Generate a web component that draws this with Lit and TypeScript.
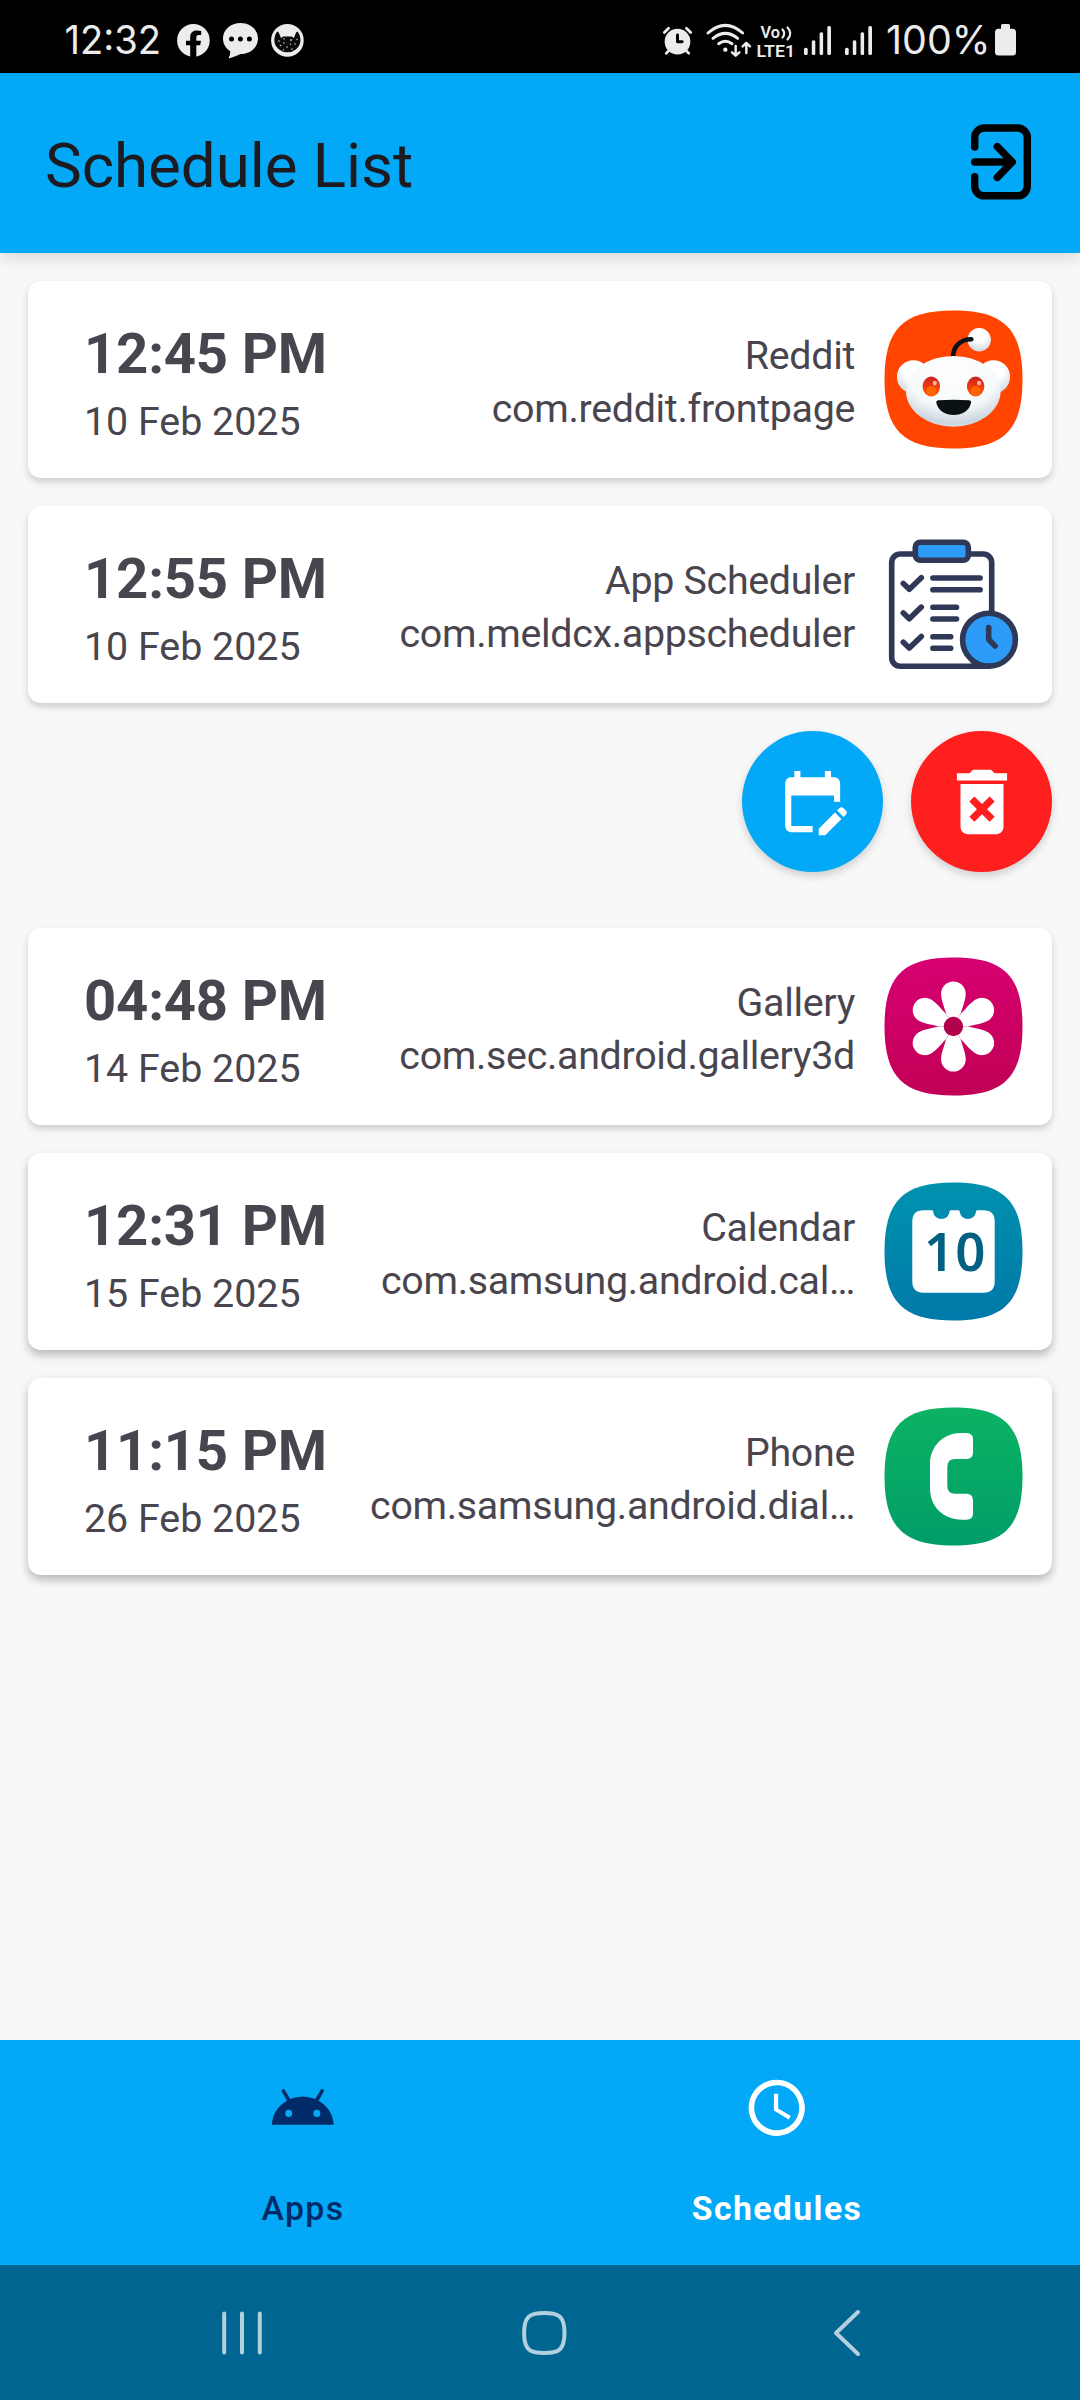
import { LitElement, html, svg, css, type TemplateResult } from "lit";
import { customElement, property } from "lit/decorators.js";

interface Schedule {
  time: string;
  date: string;
  app: string;
  pkg: string;
  icon: string;
  open?: boolean;
}

const SQUIRCLE =
  "M0 69C0 18.5 18.5 0 69 0S138 18.5 138 69 119.5 138 69 138 0 119.5 0 69Z";

const appIcons: Record<string, TemplateResult> = {
  reddit: svg`
    <defs>
      <radialGradient id="head" cx=".5" cy=".25" r=".8">
        <stop offset="0" stop-color="#fff" /><stop offset=".6" stop-color="#f6f9fa" />
        <stop offset=".88" stop-color="#cbd5de" /><stop offset="1" stop-color="#e4e9ee" />
      </radialGradient>
      <radialGradient id="ball" cx=".5" cy=".3" r=".75">
        <stop offset=".4" stop-color="#fff" /><stop offset="1" stop-color="#c9d3db" />
      </radialGradient>
      <linearGradient id="eye" x2="0" y2="1">
        <stop offset="0" stop-color="#c8232c" /><stop offset=".5" stop-color="#f03a0a" />
        <stop offset="1" stop-color="#ff5a00" />
      </linearGradient>
    </defs>
    <path d=${SQUIRCLE} fill="#ff4500" />
    <circle cx="94.7" cy="29.2" r="11.7" fill="url(#ball)" />
    <path d="M68.6 46.6C68.6 36 76 28.8 86.8 28.8" fill="none" stroke="#0b1216" stroke-width="4.6" stroke-linecap="round" />
    <circle cx="29" cy="66.3" r="16.6" fill="url(#ball)" />
    <circle cx="109" cy="66.3" r="16.6" fill="url(#ball)" />
    <ellipse cx="68.8" cy="80.8" rx="47.3" ry="35.4" fill="url(#head)" />
    <ellipse cx="46.8" cy="76" rx="8.7" ry="9.9" fill="url(#eye)" />
    <ellipse cx="91.1" cy="76" rx="8.7" ry="9.9" fill="url(#eye)" />
    <circle cx="46.8" cy="80.5" r="5" fill="#ff6500" />
    <circle cx="91.1" cy="80.5" r="5" fill="#ff6500" />
    <ellipse cx="50.3" cy="72.6" rx="2" ry="2.4" fill="#ffb9a0" />
    <ellipse cx="94.6" cy="72.6" rx="2" ry="2.4" fill="#ffb9a0" />
    <path d="M53.6 89.8Q69.2 88.8 84.8 89.8Q87 90 86.6 92.2C84.6 100.6 77.6 104.4 69.2 104.4S53.8 100.6 51.8 92.2Q51.4 90 53.6 89.8Z" fill="#0b1216" />`,
  scheduler: svg`
    <g fill="none" stroke="#2f3857" stroke-width="5.6" stroke-linecap="round" stroke-linejoin="round">
      <path d="M107.2 80V27a8.5 8.5 0 0 0-8.5-8.5H15.7A8.5 8.5 0 0 0 7.2 27V122.3a8.5 8.5 0 0 0 8.5 8.5H104" />
      <rect x="30.8" y="6.8" width="53" height="18" rx="5" fill="#2d9bf8" />
      <path d="M18.8 48l6 5.8 12-11.6M18.8 77.4l6 5.8 12-11.6M18.8 106.7l6 5.8 12-11.6" />
      <path d="M48.4 42.5H95.6M48.4 54.2H95.6M48.4 71.8H72M48.4 83.5H72M48.4 101.2H66.2M48.4 112.8H66.2" />
      <path d="M86 126.5L90 130.6H100Z" fill="#2f3857" stroke-width="1" />
      <circle cx="104.5" cy="104.2" r="26.4" fill="#2d9bf8" />
      <path d="M104.2 92V104l6.4 6.4" />
    </g>`,
  gallery: svg`
    <defs><linearGradient id="pink" x2=".1" y2="1">
      <stop offset="0" stop-color="#d80073" /><stop offset="1" stop-color="#c20056" />
    </linearGradient></defs>
    <path d=${SQUIRCLE} fill="url(#pink)" />
    ${[0, 60, 120, 180, 240, 300].map(
      (a) => svg`<path transform="rotate(${a} 68.9 69)" fill="#fff"
        d="M68.9 69L61.7 56.4C59.4 48.4 56.6 42 56.6 36.2a12.3 12.3 0 0 1 24.6 0C81.2 42 78.4 48.4 76.1 56.4Z" />`
    )}
    <circle cx="68.9" cy="69" r="9.7" fill="#b1004c" />`,
  calendar: svg`
    <defs><linearGradient id="teal" x2=".1" y2="1">
      <stop offset="0" stop-color="#0093af" /><stop offset="1" stop-color="#007aa8" />
    </linearGradient></defs>
    <path d=${SQUIRCLE} fill="url(#teal)" />
    <path fill="#fff" d="M39 27.8H47.3Q48.6 27.8 48.7 29.2A8.2 8.2 0 0 0 65 29.2Q65.1 27.8 66.4 27.8H73.8Q75.1 27.8 75.2 29.2A8.2 8.2 0 0 0 91.5 29.2Q91.6 27.8 92.9 27.8H99Q110.2 27.8 110.2 39V99Q110.2 110.2 99 110.2H39Q27.8 110.2 27.8 99V39Q27.8 27.8 39 27.8Z" />
    <text class="day" x="39.5" y="88.3" textLength="61.5">10</text>`,
  phone: svg`
    <defs><linearGradient id="green" x2="0" y2="1">
      <stop offset="0" stop-color="#0cb363" /><stop offset="1" stop-color="#009d68" />
    </linearGradient></defs>
    <path d=${SQUIRCLE} fill="url(#green)" />
    <path fill="#fff" d="M82 25.5q6.5 0 6.5 6.5V45q0 6.5-6.5 6.5H70.5q-7.7 0-7.7 7.7V78.5q0 7.7 7.7 7.7H82q6.5 0 6.5 6.5V105.7q0 6.5-6.5 6.5H77C59 112.2 45.5 99 45.5 81V56.5C45.5 38.7 59 25.5 77 25.5Z" />`,
};

@customElement("status-bar")
class StatusBar extends LitElement {
  static styles = css`
    :host { display: flex; height: 73px; background: #000; padding: 0 64px; color: #ececec; font-family: Inter, Roboto, sans-serif; }
    .group { display: flex; align-items: flex-start; }
    .right { margin-left: auto; }
    svg { display: block; flex: none; overflow: visible; fill: #ececec; }
    .clock { width: 98px; height: 73px; margin-right: 15px; font-size: 39px; }
    .percent { width: 101px; height: 73px; margin: 0 7px 0 15px; font-size: 39px; }
    .volte { font: 600 16.5px Roboto, sans-serif; margin: 25px 0 0 6px; }
    .fb { margin-top: 24px; }
    .chat { margin: 23px 0 0 13px; }
    .cat { margin: 24px 0 0 13px; }
    .alarm { margin-top: 26px; }
    .wifi { margin: 24px 0 0 14px; }
    .sig { margin: 26px 0 0 10px; }
    .sig2 { margin: 26px 0 0 14px; }
    .battery { margin-top: 24px; }
    .line { fill: none; stroke: #ececec; stroke-linecap: round; stroke-linejoin: round; }
    .ink { fill: none; stroke: #000; }
  `;

  private signal(cls: string) {
    return html`<svg class=${cls} width="27" height="29" viewBox="0 0 27 29">
      <rect x="0" y="21.7" width="3.7" height="7.3" rx="1.6" />
      <rect x="7.8" y="14.3" width="3.5" height="14.7" rx="1.5" />
      <rect x="15.6" y="6.3" width="3.5" height="22.7" rx="1.5" />
      <rect x="23.3" y="0" width="3.7" height="29" rx="1.5" />
    </svg>`;
  }

  render() {
    return html`
      <div class="group">
        <svg class="clock"><text x="0.5" y="54" textLength="96.5" lengthAdjust="spacingAndGlyphs">12:32</text></svg>
        <svg class="fb" width="33" height="33" viewBox="0 0 33 33">
          <circle cx="16.4" cy="16.4" r="16.3" />
          <path fill="#000" d="M13.2 33V21.2H9V16.7H13.2V13.4C13.2 9 15.7 6.6 19.8 6.6Q22.4 6.6 24.2 7V11H21.8C19.9 11 19.3 12 19.3 13.4V16.7H24L23.2 21.2H19.3V33Z" />
        </svg>
        <svg class="chat" width="35" height="35" viewBox="0 0 35 35">
          <path d="M17.5 0C27.3 0 35 6.6 35 15.5S27.3 31 17.5 31Q12 33.8 6.6 35.2Q5.4 35.2 6 34Q7.4 31.4 7.2 28.2C2.8 25.4 0 21 0 15.5 0 6.6 7.7 0 17.5 0Z" />
          <g fill="#000"><circle cx="8.5" cy="16" r="2.5" /><circle cx="17.4" cy="16" r="2.5" /><circle cx="26.4" cy="16" r="2.5" /></g>
        </svg>
        <svg class="cat" width="33" height="33" viewBox="0 0 33 33">
          <circle cx="16.4" cy="16.4" r="16.3" />
          <path fill="#0a0a0a" d="M6.2 7.5L7.6 8.2 10 14 12 12.4 20.8 12.4 22.8 14 25.2 8.2 26.6 7.5Q29.8 11.6 29.4 17.5A13.1 12.4 0 0 1 3.4 17.5Q3 11.6 6.2 7.5Z" />
          <g fill="#ccc">
            <circle cx="8" cy="17" r=".8" /><circle cx="13" cy="19" r=".8" /><circle cx="20" cy="16" r=".9" />
            <circle cx="24" cy="20" r=".8" /><circle cx="16" cy="23" r=".8" /><circle cx="9.5" cy="21.5" r=".8" />
            <circle cx="21" cy="25" r=".8" /><circle cx="12.5" cy="26" r=".7" /><circle cx="26" cy="15.5" r=".7" />
            <circle cx="13" cy="14.8" r=".8" /><circle cx="19.5" cy="20.2" r=".7" />
          </g>
        </svg>
      </div>
      <div class="group right">
        <svg class="alarm" width="29" height="29" viewBox="69 79 88 87">
          <circle cx="113" cy="126" r="39" />
          <path class="line" stroke-width="8.5" d="M73 98L86 85M140 85L153 98M86 154L79 161M140 154L147 161" />
          <path class="ink" stroke-width="9" stroke-linejoin="round" stroke-linecap="round" d="M113 106V126.5H127" />
        </svg>
        <svg class="wifi" width="45" height="33" viewBox="199 72 135 99">
          <path class="line" stroke-width="9" d="M205 99Q257 53 309 99M220 115Q257 85 294 115M237 131Q257 117 277 131" />
          <circle cx="257" cy="149" r="6.5" />
          <path class="line" stroke-width="7.5" d="M288 138V166M277 157L288 167L299 157M320 159V129M309 139L320 129L331 139" />
        </svg>
        <svg class="volte" width="37" height="32">
          <text x="3.5" y="13.2" textLength="19.5" lengthAdjust="spacingAndGlyphs">Vo</text>
          <path class="line" stroke-width="2.2" d="M25.5 4.5Q29 8.5 25.5 12.5M30.500 2.500Q36 8.500 30.500 14.500" />
          <text x="-0.5" y="31.6" textLength="38.5" lengthAdjust="spacingAndGlyphs">LTE1</text>
        </svg>
        ${this.signal("sig")}${this.signal("sig2")}
        <svg class="percent"><text x="-1" y="54" textLength="104.5" lengthAdjust="spacingAndGlyphs">100%</text></svg>
        <svg class="battery" width="21" height="32" viewBox="0 0 21 32">
          <path d="M7.5 0H13.5Q15 0 15 1.5V4.7H17.5Q21 4.7 21 8.2V28Q21 31.5 17.5 31.5H3.5Q0 31.5 0 28V8.2Q0 4.7 3.5 4.7H6V1.5Q6 0 7.5 0Z" />
        </svg>
      </div>`;
  }
}

@customElement("schedule-card")
class ScheduleCard extends LitElement {
  @property({ attribute: false }) item!: Schedule;

  static styles = css`
    :host { display: block; }
    .card {
      display: flex; box-sizing: border-box; height: 197px; padding: 0 29px 0 56px;
      background: #fff; border-radius: 13px; color: #49454f;
      box-shadow: var(--card-shadow);
    }
    .when { padding-top: 40px; white-space: nowrap; }
    .time { font-size: 56.25px; line-height: 66px; font-weight: 700; letter-spacing: -0.2px; }
    .date { font-size: 39.375px; line-height: 46px; margin-top: 12px; }
    .app { flex: 1; min-width: 0; padding: 48px 29px 0 0; text-align: right; font-size: 39.375px; line-height: 53px; letter-spacing: -0.3px; white-space: nowrap; }
    .icon { display: block; flex: none; width: 139px; height: 139px; margin-top: 29px; }
    .day { font: 600 52.8px "Noto Sans", "Open Sans", sans-serif; fill: #036083; }
  `;

  render() {
    const s = this.item;
    return html`<div class="card">
      <div class="when">
        <div class="time">${s.time}</div>
        <div class="date">${s.date}</div>
      </div>
      <div class="app">
        <div>${s.app}</div>
        <div>${s.pkg}</div>
      </div>
      <svg class="icon" viewBox="-0.5 -0.5 139 139">${appIcons[s.icon]}</svg>
    </div>`;
  }
}

@customElement("app-root")
class AppRoot extends LitElement {
  static styles = css`
    :host { display: flex; flex-direction: column; height: 2400px; background: #f8f8f8; font-family: Roboto, sans-serif; overflow: hidden; }
    .top {
      display: flex; align-items: flex-start; justify-content: space-between; flex: none;
      box-sizing: border-box; height: 180px; padding: 0 47px 0 45px; background: #03a9f6;
      box-shadow: 0 4px 16px rgba(0, 0, 0, 0.14);
    }
    .title { margin: 57px 0 0; font-size: 61.875px; line-height: 72px; font-weight: 400; letter-spacing: -0.04px; color: #1d1b20; }
    .exit { display: block; margin-top: 49px; }
    .list { flex: 1; display: flex; flex-direction: column; gap: 28px; padding: 28px 28px 0; --card-shadow: 0 4px 7px rgba(0, 0, 0, 0.17); }
    .low { --card-shadow: 0 5px 10px rgba(0, 0, 0, 0.26); }
    .actions { display: flex; justify-content: flex-end; gap: 28px; height: 169px; }
    .fab {
      display: flex; align-items: center; justify-content: center; width: 141px; height: 141px;
      border: 0; padding: 0; border-radius: 50%; fill: #fff; box-shadow: 0 4px 8px rgba(0, 0, 0, 0.17);
    }
    .edit { background: #03a9f6; }
    .delete { background: #ff1f1f; }
    .tabs { display: grid; grid-template-columns: 1fr 1fr; flex: none; height: 225px; padding: 0 66px; background: #03a9f6; }
    .tab {
      display: flex; flex-direction: column; align-items: center; padding-top: 34px;
      color: #002a68; fill: #002a68; font-size: 33.75px; line-height: 45px; font-weight: 500; letter-spacing: 1.4px;
    }
    .tab svg { display: block; margin-bottom: 44px; }
    .tab.on { color: #fff; fill: #fff; font-weight: 700; }
    .sys { display: flex; align-items: center; flex: none; height: 135px; padding-left: 222px; background: #016592; }
    .sys svg { display: block; fill: none; stroke: #b2d0de; stroke-width: 4; stroke-linecap: round; stroke-linejoin: round; }
    .home { margin-left: 260px; }
    .back { margin-left: 266px; }
  `;

  private schedules: Schedule[] = [
    { time: "12:45 PM", date: "10 Feb 2025", app: "Reddit", pkg: "com.reddit.frontpage", icon: "reddit" },
    { time: "12:55 PM", date: "10 Feb 2025", app: "App Scheduler", pkg: "com.meldcx.appscheduler", icon: "scheduler", open: true },
    { time: "04:48 PM", date: "14 Feb 2025", app: "Gallery", pkg: "com.sec.android.gallery3d", icon: "gallery" },
    { time: "12:31 PM", date: "15 Feb 2025", app: "Calendar", pkg: "com.samsung.android.cal…", icon: "calendar" },
    { time: "11:15 PM", date: "26 Feb 2025", app: "Phone", pkg: "com.samsung.android.dial…", icon: "phone" },
  ];

  private actions() {
    return html`<div class="actions">
      <button class="fab edit">
        <svg width="73.3" height="73.3" viewBox="0 0 24 24"><path d="M12 22H5a2 2 0 0 1-2-2l.01-14c0-1.1.88-2 1.99-2h1V2h2v2h8V2h2v2h1c1.1 0 2 .9 2 2v6h-2v-2H5v10h7v2zm10.13-5.01.71-.71a.996.996 0 0 0 0-1.41l-.71-.71a.996.996 0 0 0-1.41 0l-.71.71 2.12 2.12zm-.71.71-5.3 5.3H14v-2.12l5.3-5.3 2.12 2.12z" /></svg>
      </button>
      <button class="fab delete">
        <svg width="86" height="86" viewBox="0 0 24 24"><path d="M6 19c0 1.1.9 2 2 2h8c1.1 0 2-.9 2-2V7H6v12zm2.46-7.12 1.41-1.41L12 12.59l2.12-2.12 1.41 1.41L13.41 14l2.12 2.12-1.41 1.41L12 15.41l-2.12 2.12-1.41-1.41L10.59 14l-2.13-2.12zM15.5 4l-1-1h-5l-1 1H5v2h14V4z" /></svg>
      </button>
    </div>`;
  }

  render() {
    return html`
      <status-bar></status-bar>
      <header class="top">
        <h1 class="title">Schedule List</h1>
        <svg class="exit" width="64" height="80" viewBox="969 122 64 80" fill="none" stroke="#000" stroke-width="7.4" stroke-linecap="round" stroke-linejoin="round">
          <path d="M974.7 147V137.5a9.5 9.5 0 0 1 9.5-9.5H1017.8a9.5 9.5 0 0 1 9.5 9.5V186.3a9.5 9.5 0 0 1-9.5 9.5H984.2a9.5 9.5 0 0 1-9.5-9.5V176.7" />
          <path d="M974.7 162H1011M997.3 146.7L1012.3 162L997.3 177.3" />
        </svg>
      </header>
      <main class="list">
        ${this.schedules.map(
          (s, i) => html`<schedule-card class=${i > 2 ? "low" : ""} .item=${s}></schedule-card>${s.open ? this.actions() : ""}`
        )}
      </main>
      <nav class="tabs">
        <div class="tab">
          <svg width="67.5" height="67.5" viewBox="0 0 24 24"><path d="M17.6 9.48l1.84-3.18c.16-.31.04-.69-.26-.85a.637.637 0 0 0-.83.22l-1.88 3.24a11.463 11.463 0 0 0-8.94 0L5.65 5.67a.643.643 0 0 0-.87-.2c-.28.18-.37.54-.22.83L6.4 9.48A10.78 10.78 0 0 0 1 18h22a10.78 10.78 0 0 0-5.4-8.52zM7 15.25a1.25 1.25 0 1 1 0-2.5 1.25 1.25 0 0 1 0 2.5zm10 0a1.25 1.25 0 1 1 0-2.5 1.25 1.25 0 0 1 0 2.5z" /></svg>
          Apps
        </div>
        <div class="tab on">
          <svg width="67.5" height="67.5" viewBox="0 0 24 24"><path d="M11.99 2C6.47 2 2 6.48 2 12s4.47 10 9.99 10C17.52 22 22 17.52 22 12S17.52 2 11.99 2zM12 20c-4.42 0-8-3.58-8-8s3.58-8 8-8 8 3.58 8 8-3.58 8-8 8zm.5-13H11v6l5.25 3.15.75-1.23-4.5-2.67z" /></svg>
          Schedules
        </div>
      </nav>
      <footer class="sys">
        <svg width="40" height="46" viewBox="0 0 40 46"><path d="M2.2 3.5V42.5M20 3.5V42.5M37.8 3.5V42.5" /></svg>
        <svg class="home" width="45" height="46" viewBox="0 0 45 46"><path d="M22.3 3C37 3 42.5 6.5 42.5 23S37 43 22.3 43 2.1 39.5 2.1 23 7.6 3 22.3 3Z" /></svg>
        <svg class="back" width="28" height="48" viewBox="0 0 28 48"><path d="M25 3L3 24L25 45" /></svg>
      </footer>`;
  }
}
